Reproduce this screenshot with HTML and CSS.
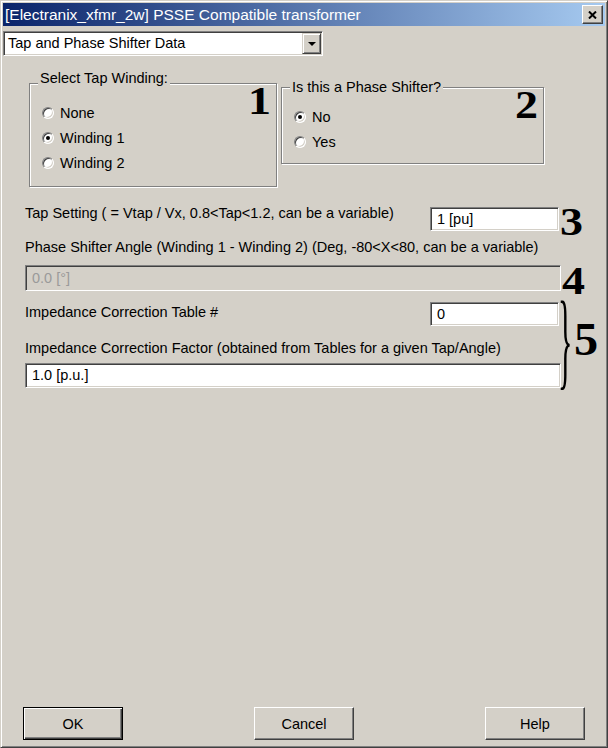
FILE: index.html
```html
<!DOCTYPE html>
<html>
<head>
<meta charset="utf-8">
<title>PSSE Compatible transformer</title>
<link rel="stylesheet" href="styles.css">
</head>
<body>
<div class="window">
  <div class="titlebar">
    <span class="title">[Electranix_xfmr_2w] PSSE Compatible transformer</span>
    <span class="close"><svg width="9" height="8" viewBox="0 0 9 8"><path d="M1 0.5 L8 7.5 M8 0.5 L1 7.5" stroke="#000" stroke-width="2" fill="none"/></svg></span>
  </div>
  <div class="combo">
    <span class="combo-text">Tap and Phase Shifter Data</span>
    <span class="combo-btn"><span class="tri"></span></span>
  </div>
  <div class="groups">
    <div class="group g1">
      <div class="legend">Select Tap Winding:</div>
      <div class="gbody">
        <div class="radios">
          <div class="opt"><span class="radio"></span>None</div>
          <div class="opt"><span class="radio on"></span>Winding 1</div>
          <div class="opt"><span class="radio"></span>Winding 2</div>
        </div>
        <div class="num gnum">1</div>
      </div>
    </div>
    <div class="group g2">
      <div class="legend">Is this a Phase Shifter?</div>
      <div class="gbody">
        <div class="radios">
          <div class="opt"><span class="radio on"></span>No</div>
          <div class="opt"><span class="radio"></span>Yes</div>
        </div>
        <div class="num gnum">2</div>
      </div>
    </div>
  </div>
  <div class="fields">
    <div class="row tap">
      <div class="label">Tap Setting ( = Vtap / Vx, 0.8&lt;Tap&lt;1.2, can be a variable)</div>
      <div class="field small">1 [pu]</div>
      <div class="num fnum">3</div>
    </div>
    <div class="label lbl-phase">Phase Shifter Angle (Winding 1 - Winding 2) (Deg, -80&lt;X&lt;80, can be a variable)</div>
    <div class="row dis-row">
      <div class="field wide disabled">0.0 [°]</div>
      <div class="num fnum">4</div>
    </div>
    <div class="row imp">
      <div class="imp-col">
        <div class="row tbl">
          <div class="label">Impedance Correction Table #</div>
          <div class="field small">0</div>
        </div>
        <div class="label lbl-factor">Impedance Correction Factor (obtained from Tables for a given Tap/Angle)</div>
        <div class="field wide factor">1.0 [p.u.]</div>
      </div>
      <div class="brace-wrap"><span class="brace">}</span><span class="num five">5</span></div>
    </div>
  </div>
  <div class="buttons">
    <div class="btn default">OK</div>
    <div class="btn">Cancel</div>
    <div class="btn">Help</div>
  </div>
</div>
</body>
</html>
```
FILE: styles.css
```css
html, body {
  margin: 0;
  padding: 0;
}
body {
  width: 608px;
  height: 748px;
  overflow: hidden;
  background: #d4d0c8;
  color: #000;
  font-family: "Liberation Sans", Arial, sans-serif;
  font-size: 14.5px;
}
.window {
  box-sizing: border-box;
  width: 608px;
  height: 748px;
  border: 1px solid;
  border-color: #d4d0c8 #404040 #404040 #d4d0c8;
  box-shadow: inset 1px 1px #fff, inset -1px -1px #808080;
  padding: 2px;
  display: flex;
  flex-direction: column;
  background: #d4d0c8;
}
.titlebar {
  flex: none;
  height: 23px;
  display: flex;
  align-items: center;
  padding-left: 2px;
  background: linear-gradient(to right, #0a246a, #a6caf0);
}
.title {
  flex: 1;
  color: #fff;
  font-size: 15.5px;
  line-height: 23px;
  white-space: nowrap;
}
.close {
  box-sizing: border-box;
  width: 21px;
  height: 19px;
  margin-right: 2px;
  background: #d4d0c8;
  border: 1px solid;
  border-color: #fff #404040 #404040 #fff;
  box-shadow: inset -1px -1px #808080;
  display: flex;
  align-items: center;
  justify-content: center;
}
.close svg {
  display: block;
}
.combo {
  flex: none;
  box-sizing: border-box;
  margin-top: 5px;
  width: 320px;
  height: 25px;
  padding: 1px;
  border: 1px solid;
  border-color: #808080 #fff #fff #808080;
  box-shadow: inset 1px 1px #404040, inset -1px -1px #d4d0c8;
  background: #fff;
  display: flex;
}
.combo-text {
  flex: 1;
  padding-left: 3px;
  line-height: 21px;
  white-space: nowrap;
}
.combo-btn {
  box-sizing: border-box;
  width: 19px;
  background: #d4d0c8;
  border: 1px solid;
  border-color: #d4d0c8 #404040 #404040 #d4d0c8;
  box-shadow: inset 1px 1px #fff, inset -1px -1px #808080;
  display: flex;
  align-items: center;
  justify-content: center;
}
.tri {
  width: 0;
  height: 0;
  border-left: 4px solid transparent;
  border-right: 4px solid transparent;
  border-top: 4px solid #000;
  margin-top: 1px;
}
.groups {
  flex: none;
  display: flex;
  align-items: flex-start;
  margin-top: 27px;
  padding-left: 26px;
}
.group {
  box-sizing: border-box;
  border: 1px solid #808080;
  box-shadow: 1px 1px 0 #fff, inset 1px 1px 0 #fff;
}
.g1 {
  width: 248px;
  height: 104px;
}
.g2 {
  width: 263px;
  height: 77px;
  margin-left: 4px;
  margin-top: 4px;
}
.legend {
  width: fit-content;
  margin-left: 8px;
  padding: 0 2px;
  line-height: 17px;
  background: #d4d0c8;
  white-space: nowrap;
}
.g1 .legend {
  margin-top: -14px;
  margin-bottom: 0;
}
.g2 .legend {
  margin-top: -9px;
  margin-bottom: -5px;
}
.gbody {
  display: flex;
  justify-content: space-between;
  align-items: flex-start;
}
.radios {
  padding-top: 13px;
}
.opt {
  display: flex;
  align-items: center;
  height: 25px;
  padding-left: 12px;
  white-space: nowrap;
}
.radio {
  position: relative;
  box-sizing: border-box;
  width: 12px;
  height: 12px;
  margin-right: 6px;
  border-radius: 50%;
  background: #fff;
  border: 1px solid;
  border-color: #808080 #fff #fff #808080;
  box-shadow: inset 1px 1px #404040, inset -1px -1px #d4d0c8;
}
.radio.on::after {
  content: "";
  position: absolute;
  left: 3px;
  top: 3px;
  width: 4px;
  height: 4px;
  border-radius: 50%;
  background: #000;
}
.num {
  font-family: "Liberation Serif", "Times New Roman", serif;
  font-weight: bold;
  font-size: 40px;
  line-height: 28px;
  height: 28px;
  margin-right: 5px;
  transform: scaleX(1.15);
}
.gnum {
  transform-origin: 100% 50%;
}
.fnum {
  transform-origin: 0 50%;
}
.fields {
  flex: none;
  padding-left: 22px;
}
.row {
  display: flex;
  align-items: flex-start;
}
.label {
  line-height: 17px;
  white-space: nowrap;
}
.tap {
  margin-top: 18px;
  height: 34px;
}
.tap .label,
.tbl .label {
  width: 405px;
}
.field {
  box-sizing: border-box;
  border: 1px solid;
  border-color: #808080 #fff #fff #808080;
  box-shadow: inset 1px 1px #404040, inset -1px -1px #d4d0c8;
  background: #fff;
  padding-left: 6px;
  white-space: nowrap;
}
.small {
  width: 129px;
  height: 24px;
  line-height: 22px;
}
.tap .field {
  margin-top: 2px;
}
.tap .num {
  margin-top: 2.5px;
  margin-left: 1px;
}
.dis-row {
  margin-top: 9px;
  height: 26px;
}
.wide {
  width: 536px;
  height: 25px;
  line-height: 23px;
}
.disabled {
  height: 26px;
  line-height: 24px;
  background: #d4d0c8;
  color: #9a9a9a;
}
.dis-row .num {
  margin-top: 2.5px;
  margin-left: 1px;
  line-height: 26px;
  height: 26px;
}
.imp-col {
  width: 536px;
}
.tbl {
  margin-top: 11px;
  height: 25px;
}
.tbl .label {
  margin-top: 2px;
}
.lbl-factor {
  margin-top: 13px;
}
.factor {
  margin-top: 6px;
}
.brace-wrap {
  display: flex;
  align-items: center;
  align-self: stretch;
}
.brace {
  display: block;
  font-family: "Liberation Serif", "Times New Roman", serif;
  font-size: 30px;
  line-height: 22px;
  height: 22px;
  transform: scaleY(3.6);
  transform-origin: 50% 50%;
  margin-top: 0;
  margin-left: -3px;
}
.five {
  font-size: 46px;
  line-height: 32px;
  height: 32px;
  margin-left: 2px;
  margin-top: 0;
  margin-right: 0;
  transform: scaleX(1.05);
  transform-origin: 0 50%;
}
.buttons {
  flex: none;
  margin-top: auto;
  margin-bottom: 5px;
  padding: 0 20px;
  display: flex;
  justify-content: space-between;
}
.btn {
  box-sizing: border-box;
  width: 100px;
  height: 33px;
  display: flex;
  align-items: center;
  justify-content: center;
  background: #d4d0c8;
  border: 1px solid;
  border-color: #fff #404040 #404040 #fff;
  box-shadow: inset -1px -1px #808080;
}
.btn.default {
  border-color: #000;
  box-shadow: inset 1px 1px #fff, inset -1px -1px #404040, inset -2px -2px #808080;
}
```
